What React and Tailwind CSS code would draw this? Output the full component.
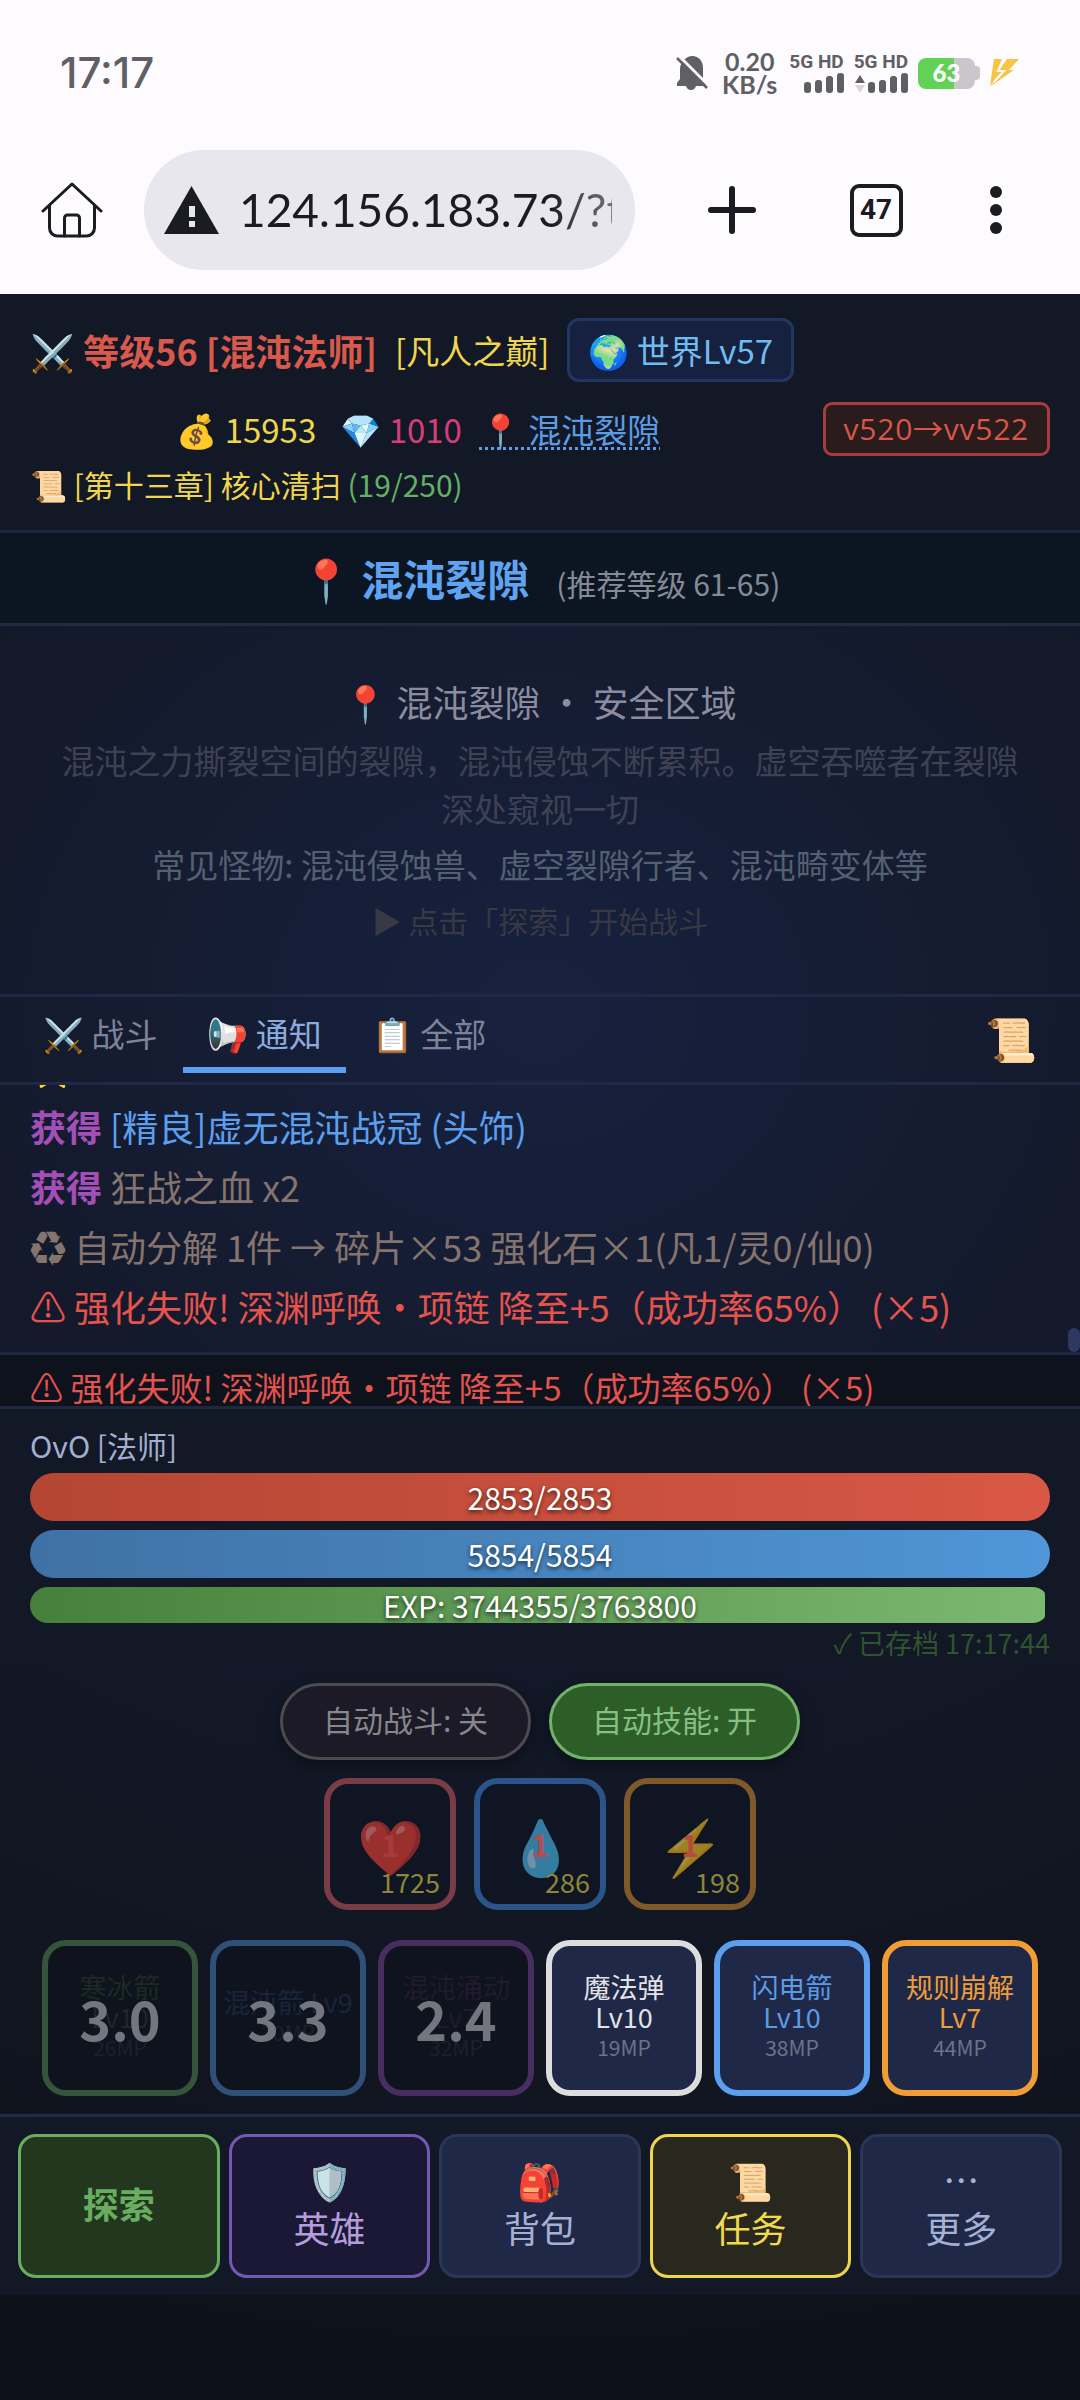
const quickItems = [
  { icon: '❤️', label: '生命药水', count: 1, price: 1725, border: 'border-[#7a3d45]', countColor: 'text-[#a63a42]' },
  { icon: '💧', label: '法力药水', count: 1, price: 286, border: 'border-[#2b5488]', countColor: 'text-[#b84a55]' },
  { icon: '⚡', label: '能量药水', count: 1, price: 198, border: 'border-[#80592a]', countColor: 'text-[#b84a3c]' },
];

const coolingSkills = [
  { name: '寒冰箭', level: 'Lv10', mp: '26MP', left: '3.0', border: 'border-[#35553b]', color: 'text-[#1b2a24]' },
  { name: '混沌箭 Lv9', level: null, mp: '30MP', left: '3.3', border: 'border-[#30507a]', color: 'text-[#18253a]' },
  { name: '混沌涌动', level: 'Lv7', mp: '32MP', left: '2.4', border: 'border-[#482e60]', color: 'text-[#211a30]' },
];

const readySkills = [
  { name: '魔法弹', level: 'Lv10', mp: '19MP', border: 'border-[#dddddf]', color: 'text-[#e2e3e8]' },
  { name: '闪电箭', level: 'Lv10', mp: '38MP', border: 'border-[#5b9fee]', color: 'text-[#5b9be6]' },
  { name: '规则崩解', level: 'Lv7', mp: '44MP', border: 'border-[#f09d38]', color: 'text-[#ee9c3c]' },
];

const navItems = [
  { icon: '🛡️', label: '英雄', style: 'bg-[#1b1836] border-[#7459b4] text-[#b39ddb]' },
  { icon: '🎒', label: '背包', style: 'bg-[#1f2846] border-[#2b3655] text-[#a5b0d6]' },
  { icon: '📜', label: '任务', style: 'bg-[#29281e] border-[#efd54e] text-[#f3d94e]' },
  { icon: '⋯', label: '更多', style: 'bg-[#1f2846] border-[#2b3655] text-[#a5b0d6]' },
];

function Signal() {
  return (
    <svg width="40" height="20" viewBox="0 0 40 20" fill="#606063">
      <rect x="0" y="9" width="7" height="11" rx="3" />
      <rect x="11" y="7" width="7" height="13" rx="3" />
      <rect x="22" y="3" width="7" height="17" rx="3" />
      <rect x="33" y="0" width="7" height="20" rx="3" />
    </svg>
  );
}

function StatusBar() {
  return (
    <div className="flex h-[126px] items-center justify-between pt-5 pr-[60px] pl-[60px] text-[#606063]">
      <span className="font-['Inter',sans-serif] text-[42px] leading-[48px] font-medium">17:17</span>
      <div className="flex items-center">
        <svg width="32" height="36" viewBox="0 0 32 36" fill="#606063">
          <path d="M9 4c2-2 5-3 7-3 7 0 11 5 11 12v10l3 6v2H20c-.8 2.500-2.500 4-5 4s-4.200-1.500-5-4H1v-3l3-4V14c0-4 2-8 5-10Z" />
          <path d="M3 1 33 31" stroke="#fdfbff" strokeWidth="3" />
          <path d="M1 3 31 33" stroke="#606063" strokeWidth="2.500" />
        </svg>
        <div className="ml-3.5 flex flex-col items-center font-['Lato',sans-serif] text-[25px] leading-[23px] font-bold">
          <span>0.20</span>
          <span>KB/s</span>
        </div>
        <div className="ml-3 flex flex-col items-end gap-0.5 font-['Roboto',sans-serif] text-[19px] leading-[18px] font-bold">
          <span>5G HD</span>
          <Signal />
        </div>
        <div className="ml-2.5 flex flex-col items-end gap-0.5 font-['Roboto',sans-serif] text-[19px] leading-[18px] font-bold">
          <span>5G HD</span>
          <div className="flex items-end gap-0.5">
            <svg width="12" height="18" viewBox="0 0 12 18">
              <path d="m6 0 5 8H1Z" fill="#606063" />
              <path d="m6 18 5-8H1Z" fill="#d8d6da" />
            </svg>
            <Signal />
          </div>
        </div>
        <div className="ml-2.5 flex items-center">
          <div className="flex h-[31px] w-[57px] items-center justify-center rounded-lg bg-[linear-gradient(90deg,#62d256_0_64%,#c9c7cb_64%)] font-['Lato',sans-serif] text-[24px] leading-[30px] font-black text-white">
            63
          </div>
          <div className="h-3.5 w-[5px] rounded-r bg-[#c9c7cb]" />
        </div>
        <svg className="ml-2" width="32" height="30" viewBox="0 0 32 30">
          <path d="M6 1h8L9 13h5L2 28 4 14Z" fill="#f6c544" />
          <path d="M19 1h12L21 12h5L3 28l9-12H8Z" fill="#f6c544" />
          <path d="m17 1-7 12h6L6 24" fill="none" stroke="#fdfbff" strokeWidth="2" />
        </svg>
      </div>
    </div>
  );
}

function BrowserBar() {
  return (
    <div className="flex h-[168px] items-center pr-9 pl-[41px] text-[#1b1b22]">
      <button type="button" aria-label="主页">
        <svg width="62" height="56" viewBox="0 0 62 56" fill="none" stroke="#1b1b22" strokeWidth="3" strokeLinecap="round" strokeLinejoin="round">
          <path d="M2 29 31 2l29 27" />
          <path d="M8.500 24v22a8 8 0 0 0 8 8h29a8 8 0 0 0 8-8V24" />
          <path d="M23.500 54V36a3 3 0 0 1 3-3h9a3 3 0 0 1 3 3v18" />
        </svg>
      </button>
      <div className="mr-[25px] ml-[41px] flex h-[120px] min-w-0 flex-1 items-center rounded-full bg-[#e8e7f0] pr-[23px] pl-5">
        <svg className="shrink-0" width="55" height="48" viewBox="0 0 55 48">
          <path d="M27.500 0 55 48H0Z" fill="#1b1b22" />
          <path d="M25 20h6v11h-6Zm0 15h6v6h-6Z" fill="#e8e7f0" />
        </svg>
        <input
          type="text"
          aria-label="网址"
          defaultValue="124.156.183.73/?t"
          className="ml-5 min-w-0 flex-1 bg-transparent font-['Lato',sans-serif] text-[46px] leading-[60px] outline-none [mask-image:linear-gradient(90deg,#000_84%,#000c_90%,#0009)]"
        />
      </div>
      <button type="button" aria-label="新标签页" className="flex w-36 justify-center">
        <svg width="48" height="48" viewBox="0 0 48 48" stroke="#1b1b22" strokeWidth="6" strokeLinecap="round">
          <path d="M24 3v42M3 24h42" />
        </svg>
      </button>
      <div className="flex w-36 justify-center">
        <button type="button" className="h-[53px] w-[53px] rounded-[9px] border-4 border-[#1b1b22] font-['Roboto',sans-serif] text-[28px] leading-[44px] font-bold">
          47
        </button>
      </div>
      <button type="button" aria-label="菜单" className="flex w-24 justify-center">
        <svg width="12" height="48" viewBox="0 0 12 48" fill="#1b1b22">
          <circle cx="6" cy="6" r="6" />
          <circle cx="6" cy="24" r="6" />
          <circle cx="6" cy="42" r="6" />
        </svg>
      </button>
    </div>
  );
}

function GameHeader() {
  return (
    <header className="border-b-3 border-[#1e2740] bg-[#121825] px-[30px] pt-6 pb-6">
      <div className="flex items-center gap-[18px]">
        <span className="text-[36px] leading-[54px] font-bold text-[#d9594c]">⚔️ 等级56 [混沌法师]</span>
        <span className="text-[33px] leading-[48px] text-[#f0d64d]">[凡人之巅]</span>
        <button type="button" className="rounded-xl border-3 border-[#213661] bg-[#16213f] px-[18px] py-[5px] text-[33px] leading-[48px] text-[#70bcf0]">
          🌍 世界Lv57
        </button>
      </div>
      <div className="mt-5 flex items-center gap-4 text-[33px] leading-[48px]">
        <div className="flex flex-1 justify-center">
          <span className="text-[#f0d64d]">💰 15953</span>
          <span className="ml-6 text-[#d63d77]">💎 1010</span>
          <a href="#map" className="ml-[18px] text-[#5c9ce6] underline decoration-dotted decoration-3 underline-offset-4">
            📍 混沌裂隙
          </a>
        </div>
        <button type="button" className="rounded-[9px] border-3 border-[#a73d3b] bg-[#2a1b1c] px-[18px] font-['Open_Sans','Noto_Sans_CJK_SC',sans-serif] text-[30px] leading-[48px] tracking-wide text-[#d9564a]">
          v520→vv522
        </button>
      </div>
      <p className="mt-[7px] text-[30px] leading-[43px] text-[#f0d64d]">
        📜 [第十三章] 核心清扫 <span className="text-[#63b065]">(19/250)</span>
      </p>
    </header>
  );
}

function AreaPanel() {
  return (
    <>
      <div className="flex items-baseline justify-center gap-[27px] border-b-3 border-[#1e2b45] bg-[#0c1522] py-[15px]">
        <h1 className="text-[42px] leading-[60px] font-bold text-[#5fa4f2]">📍 混沌裂隙</h1>
        <span className="text-[30px] leading-[43px] text-[#858a99]">(推荐等级 61-65)</span>
      </div>
      <section className="flex flex-col gap-2 px-[60px] pt-12 pb-[50px] text-center">
        <h2 className="text-[36px] leading-[54px] text-[#8b8d9f]">📍 混沌裂隙 · 安全区域</h2>
        <p className="text-[33px] leading-[48px] text-[#3e4154]">
          混沌之力撕裂空间的裂隙，混沌侵蚀不断累积。虚空吞噬者在裂隙深处窥视一切
        </p>
        <p className="text-[33px] leading-[48px] text-[#526072]">常见怪物: 混沌侵蚀兽、虚空裂隙行者、混沌畸变体等</p>
        <p className="text-[30px] leading-[48px] text-[#373944]">▶ 点击「探索」开始战斗</p>
      </section>
    </>
  );
}

function LogPanel() {
  return (
    <section>
      <div className="flex items-start justify-between border-y-3 border-[#1f2946] pr-[43px] pb-[9px] pl-[19px]">
        <div role="tablist" className="flex gap-0.5 text-[33px] leading-[48px] text-[#7d8498]">
          <button type="button" role="tab" aria-selected="false" className="border-b-6 border-transparent px-6 pt-3 pb-2.5">
            ⚔️ 战斗
          </button>
          <button type="button" role="tab" aria-selected="true" className="border-b-6 border-[#5b9fee] px-6 pt-3 pb-2.5 text-[#8daade]">
            <span className="inline-block -scale-x-100">📢</span> 通知
          </button>
          <button type="button" role="tab" aria-selected="false" className="border-b-6 border-transparent px-6 pt-3 pb-2.5">
            📋 全部
          </button>
        </div>
        <button type="button" aria-label="日志" className="pt-2.5 text-[42px] leading-[60px]">
          📜
        </button>
      </div>
      <div className="relative flex h-[267px] flex-col justify-end overflow-hidden px-[30px] pb-4 text-[36px] leading-[60px] text-[#85746e]">
        <p className="text-[#f0d64d]">⭐</p>
        <p>
          <b className="text-[#a34fb8]">获得</b> <span className="text-[#5b9fee]">[精良]虚无混沌战冠 (头饰)</span>
        </p>
        <p>
          <b className="text-[#a34fb8]">获得</b> 狂战之血 x2
        </p>
        <p>♻ 自动分解 1件 → 碎片×53 强化石×1(凡1/灵0/仙0)</p>
        <p className="text-[#e5534d]">⚠ 强化失败! 深渊呼唤·项链 降至+5（成功率65%） (×5)</p>
        {/* scrollbar thumb */}
        <div className="absolute right-0 bottom-0 h-6 w-3 rounded-full bg-[#2c3860]" />
      </div>
      <div className="h-[57px] overflow-hidden border-y-3 border-[#1e2740] bg-[#0d121d] px-[30px] pt-2 text-[33px] leading-[48px] text-[#e5534d]">
        ⚠ 强化失败! 深渊呼唤·项链 降至+5（成功率65%） (×5)
      </div>
    </section>
  );
}

function Bar({ value, max, label, fill, size }) {
  return (
    <div className={`grid overflow-hidden rounded-full ${size}`}>
      <div className={`col-start-1 row-start-1 rounded-r-lg ${fill}`} style={{ width: `${(value / max) * 100}%` }} />
      <span className="col-start-1 row-start-1 self-center text-center text-[30px] leading-[36px] text-white [text-shadow:0_2px_4px_rgba(0,0,0,0.7)]">
        {label}
      </span>
    </div>
  );
}

function PlayerPanel() {
  return (
    <section className="bg-[#121825] px-[30px] pt-[15px]">
      <p className="text-[30px] leading-[43px] text-[#a3aed0]">OvO [法师]</p>
      <div className="mt-1.5 flex flex-col gap-[9px]">
        <Bar value={2853} max={2853} label="2853/2853" fill="bg-linear-to-r from-[#b54634] to-[#d95745]" size="h-12" />
        <Bar value={5854} max={5854} label="5854/5854" fill="bg-linear-to-r from-[#3f72a4] to-[#5096d8]" size="h-12" />
        <Bar value={3744355} max={3763800} label="EXP: 3744355/3763800" fill="bg-linear-to-r from-[#47803c] to-[#7cb970]" size="h-9" />
      </div>
      <p className="text-right text-[27px] leading-[40px] text-[#2e5430]">✓ 已存档 17:17:44</p>
    </section>
  );
}

function Actions() {
  return (
    <section className="flex flex-col items-center pt-5 pb-[18px]">
      <div className="flex gap-[18px] text-[30px] leading-[43px]">
        <button type="button" className="rounded-full border-3 border-[#4b4b50] bg-[#1b1a26] px-10 pt-3 pb-4 text-[#87878c] shadow-[0_6px_18px_rgba(0,0,0,0.4)]">
          自动战斗: 关
        </button>
        <button type="button" className="rounded-full border-3 border-[#72b36c] bg-[#2d5e27] px-10 pt-3 pb-4 text-[#86bf82] shadow-[0_6px_18px_rgba(0,0,0,0.4)]">
          自动技能: 开
        </button>
      </div>

      <div className="mt-[18px] flex gap-[18px]">
        {quickItems.map((item) => (
          <button
            key={item.label}
            type="button"
            aria-label={item.label}
            className={`relative h-[132px] w-[132px] rounded-3xl border-6 bg-[#101524] ${item.border}`}
          >
            <span className="text-[54px] leading-[60px] opacity-60">{item.icon}</span>
            <span className={`absolute inset-0 text-[30px] leading-[120px] font-bold ${item.countColor}`}>{item.count}</span>
            <span className="absolute right-2.5 bottom-1.5 text-[27px] leading-[32px] text-[#8e8638]">{item.price}</span>
          </button>
        ))}
      </div>

      <div className="mt-[30px] flex gap-3 text-[27px] leading-[30px]">
        {coolingSkills.map((skill) => (
          <button
            key={skill.name}
            type="button"
            disabled
            className={`relative flex h-[156px] w-[156px] flex-col items-center justify-center rounded-3xl border-6 bg-[#0f131d] pb-0.5 ${skill.border} ${skill.color}`}
          >
            <span>{skill.name}</span>
            {skill.level && <span>{skill.level}</span>}
            <span className="text-[21px] text-[#1c202b]">{skill.mp}</span>
            <span className="absolute inset-0 text-[54px] leading-[144px] font-bold text-[#74767f]">{skill.left}</span>
          </button>
        ))}
        {readySkills.map((skill) => (
          <button
            key={skill.name}
            type="button"
            className={`flex h-[156px] w-[156px] flex-col items-center justify-center rounded-3xl border-6 bg-[#1f2846] pb-0.5 ${skill.border} ${skill.color}`}
          >
            <span>{skill.name}</span>
            <span>{skill.level}</span>
            <span className="text-[21px] text-[#6b7289]">{skill.mp}</span>
          </button>
        ))}
      </div>
    </section>
  );
}

function BottomNav() {
  return (
    <nav className="flex gap-[9px] border-t-3 border-[#222a45] bg-[#121825] px-[18px] py-[17px] text-[36px] leading-[48px]">
      <button type="button" className="h-36 flex-1 rounded-[18px] border-3 border-[#69ad61] bg-[#23371f] pb-1.5 font-bold text-[#69ad61]">
        探索
      </button>
      {navItems.map((item) => (
        <button key={item.label} type="button" className={`flex h-36 flex-1 flex-col items-center justify-center rounded-[18px] border-3 pb-1.5 ${item.style}`}>
          <span>{item.icon}</span>
          <span>{item.label}</span>
        </button>
      ))}
    </nav>
  );
}

export default function App() {
  return (
    <div className="flex min-h-screen flex-col bg-[#fdfbff] font-['Noto_Sans_CJK_SC',sans-serif]">
      <StatusBar />
      <BrowserBar />
      <main className="flex-1 bg-[radial-gradient(ellipse_150%_66%_at_50%_34%,#17213f_0%,#141a2c_35%,#10151f_80%,#0d1119_100%)]">
        <GameHeader />
        <AreaPanel />
        <LogPanel />
        <PlayerPanel />
        <Actions />
        <BottomNav />
      </main>
    </div>
  );
}
